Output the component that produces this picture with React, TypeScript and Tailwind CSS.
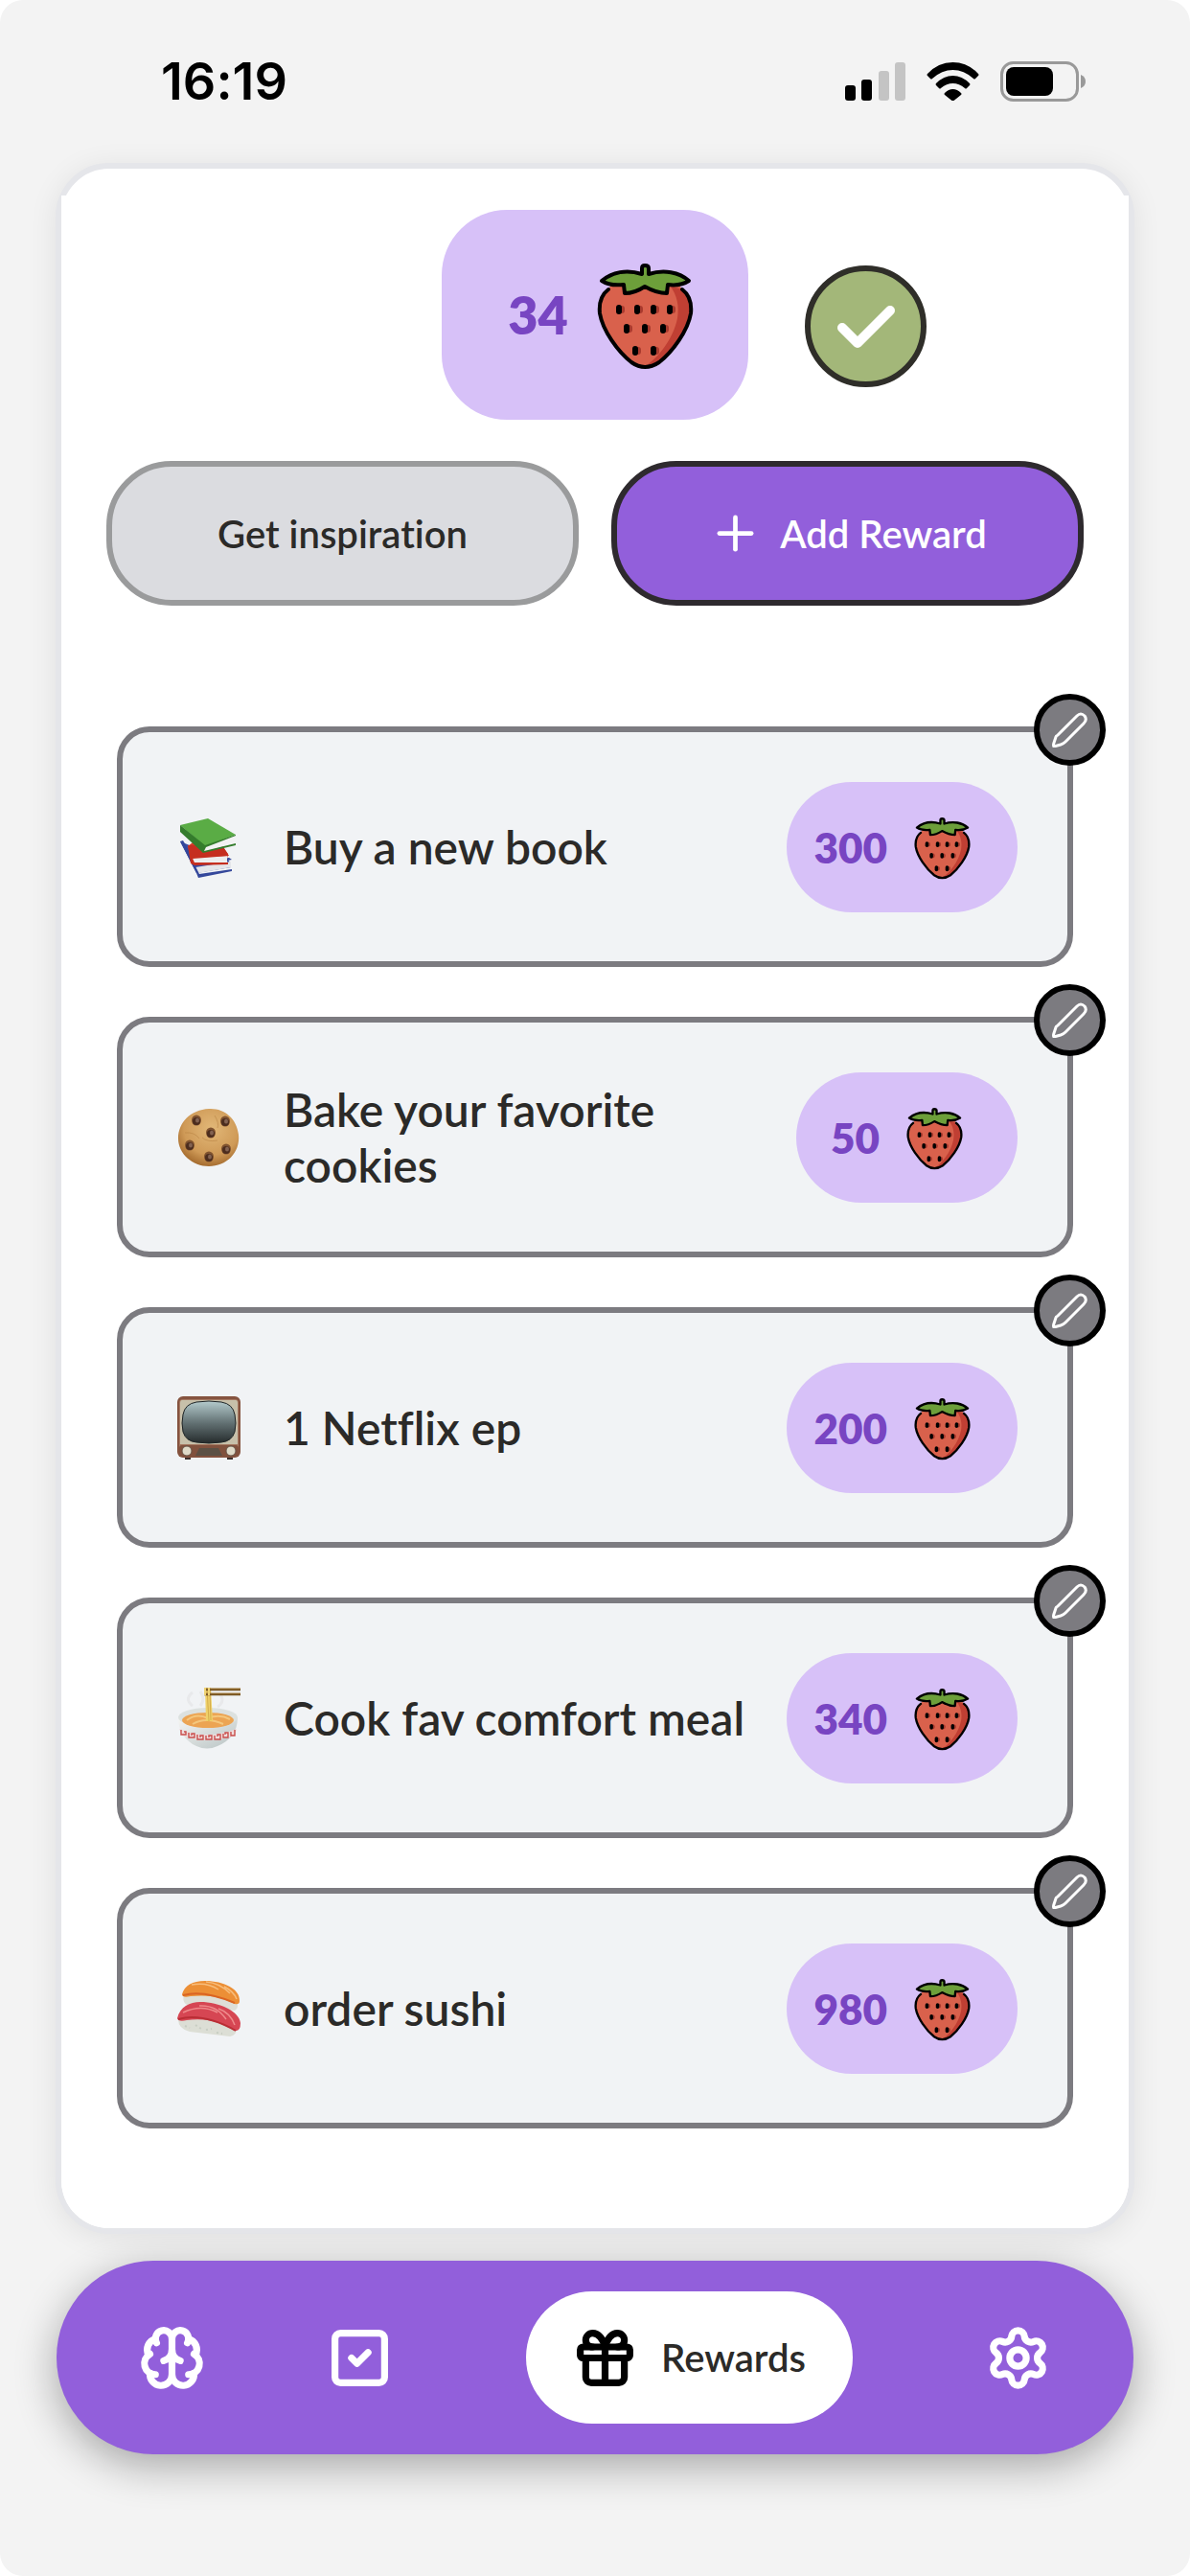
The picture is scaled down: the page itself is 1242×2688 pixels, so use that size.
import { Brain, Gift, Plus, Settings, SquareCheck } from "lucide-react";
import type { ComponentType } from "react";

interface Reward {
  title: string;
  cost: number;
  icon: ComponentType;
}

function Strawberry({ className }: { className: string }) {
  const seeds = [
    [23, 48], [42, 48], [59, 48], [76, 48],
    [31, 68], [50, 68], [69, 68],
    [40, 91], [59, 91],
  ];
  return (
    <svg viewBox="0 0 101 111" className={className} aria-hidden="true">
      <path d="M12 27C4 33 2 42 3 52C6 70 22 92 36 103Q50 113 65 103C79 92 95 70 98 52C99 42 97 33 89 27L84 20H16Z" fill="#d9614c" />
      <path d="M76 23L89 27C97 33 99 42 98 52C95 70 79 92 65 103Q57 108 49 108C64 99 80 78 84 57C86 45 84 33 76 23Z" fill="#c03f33" />
      {seeds.map(([x, y]) => (
        <g key={`${x}-${y}`}>
          <rect x={x} y={y - 4} width="6" height="8" rx="3" fill="#a93a2e" />
          <rect x={x - 3} y={y - 5} width="6" height="10" rx="3" fill="#000" />
        </g>
      ))}
      <path d="M12 27C4 33 2 42 3 52C6 70 22 92 36 103Q50 113 65 103C79 92 95 70 98 52C99 42 97 33 89 27" fill="none" stroke="#000" strokeWidth="4" strokeLinecap="round" />
      <path d="M47 11V5Q47 2 50 2Q54 2 54 5V11C70 6 86 9 96 18C90 22 82 23 74 22L73 31C64 31 57 28 50 24C44 28 37 31 29 31L28 22C19 23 11 22 5 18C16 9 31 6 47 11Z" fill="#6d9f3a" stroke="#000" strokeWidth="4" strokeLinejoin="round" />
    </svg>
  );
}

function Books() {
  return (
    <svg viewBox="0 0 66 66" className="size-full" aria-hidden="true">
      <path d="M3 27L20 60L56 54L54 47L30 38Z" fill="#3b4fa6" />
      <path d="M19 54L56 48V54L22 60Z" fill="#e4e5ea" />
      <path d="M3 27L20 60L22 65L57 58V56L23 61L19 53L57 46L54 44L20 50L6 26Z" fill="#34479b" />
      <path d="M11 32L15 50L51 50L53 40L47 32L20 25Z" fill="#d93a29" />
      <path d="M16 44L52 42V49L17 51Z" fill="#ededee" />
      <path d="M11 31L14 50L18 52L53 51V49L18 49L16 45L54 42L47 31Z" fill="#c52e20" />
      <path d="M3 10L32 3L61 20L29 32Z" fill="#5aac45" />
      <path d="M28 32L60 22V29L28 38Z" fill="#f2f2f2" />
      <path d="M3 10L29 31L61 20V21L30 33L28 37L61 29V31L27 39L3 17Z" fill="#347c2c" />
    </svg>
  );
}

function Cookie() {
  const chips = [
    [20, 15], [50, 16], [35, 28], [13, 41], [51, 45], [33, 53],
  ];
  return (
    <svg viewBox="0 0 66 66" className="size-full" aria-hidden="true">
      <defs>
        <radialGradient id="cookie" cx="0.55" cy="0.35" r="0.65">
          <stop offset="0" stopColor="#e2b878" />
          <stop offset="0.7" stopColor="#cf9a57" />
          <stop offset="1" stopColor="#a66d30" />
        </radialGradient>
      </defs>
      <path d="M33 3C49 2 62 13 64 30C66 49 51 63 33 63C16 63 1 50 1 34C1 17 14 4 33 3Z" fill="url(#cookie)" />
      <path d="M8 28Q18 27 23 34M26 33Q31 38 42 36M39 10Q44 18 42 23" fill="none" stroke="#b98345" strokeWidth="1" opacity="0.6" />
      {chips.map(([x, y]) => (
        <g key={`${x}-${y}`}>
          <ellipse cx={x} cy={y} rx="5" ry="5.5" fill="#80532f" />
          <ellipse cx={x} cy={y + 1} rx="4" ry="4" fill="#4c2d1e" />
          <ellipse cx={x + 1} cy={y} rx="2" ry="2.5" fill="#836251" />
        </g>
      ))}
    </svg>
  );
}

function Television() {
  return (
    <svg viewBox="0 0 66 66" className="size-full" aria-hidden="true">
      <defs>
        <linearGradient id="screen" x1="0" y1="0" x2="0" y2="1">
          <stop offset="0" stopColor="#b4cbcd" />
          <stop offset="0.5" stopColor="#657476" />
          <stop offset="1" stopColor="#252b2c" />
        </linearGradient>
      </defs>
      <path d="M8 63H14V66H8ZM52 63H58V66H52Z" fill="#3d302c" />
      <rect x="0" y="0" width="66" height="64" rx="6" fill="#85533f" />
      <rect x="2" y="3" width="62" height="60" rx="4" fill="#a47760" />
      <path d="M5 4H61Q63 4 63 7V50H3V7Q3 4 5 4Z" fill="#c7c0aa" />
      <path d="M20 6Q33 4 46 6Q58 8 60 19Q62 28 60 37Q57 47 46 48Q33 50 20 48Q9 47 6 37Q4 28 6 19Q8 8 20 6Z" fill="url(#screen)" stroke="#1e2426" strokeWidth="1" />
      <rect x="2" y="51" width="62" height="12" rx="3" fill="#81513d" />
      <path d="M23 54H43L47 62H19Z" fill="#5c5044" />
      <circle cx="10" cy="57" r="5" fill="#dfdac8" stroke="#655346" />
      <circle cx="56" cy="57" r="5" fill="#dfdac8" stroke="#655346" />
    </svg>
  );
}

function Noodles() {
  return (
    <svg viewBox="0 0 66 66" className="size-full" aria-hidden="true">
      <defs>
        <linearGradient id="bowl" x1="0" y1="0" x2="1" y2="1">
          <stop offset="0" stopColor="#f6f6f3" />
          <stop offset="1" stopColor="#b7c2c3" />
        </linearGradient>
      </defs>
      <path d="M16 20Q7 13 16 6M24 20Q30 13 24 5M42 21Q50 16 45 8" fill="none" stroke="#e8e9eb" strokeWidth="3" />
      <path d="M1 32C1 47 9 57 20 62Q31 67 42 62C54 57 63 48 63 32Z" fill="url(#bowl)" />
      <ellipse cx="32" cy="32" rx="31" ry="10" fill="#dce1df" />
      <ellipse cx="32" cy="35" rx="27" ry="8" fill="#eca452" />
      <path d="M10 35Q20 27 32 33Q44 28 55 34M16 39Q30 31 48 39" fill="none" stroke="#f4c77d" strokeWidth="2" />
      <path d="M2 44Q31 56 62 44L60 51Q32 60 5 51Z" fill="#efdddd" />
      <path d="M4 45V50H9V47H7M12 48V53H18V49H15V51M21 50V55H27V51H24V53M30 51V55H36V51H33V53M39 51V55H45V50H42V52M48 49V53H53V48H50V50M56 47V51H60V45" fill="none" stroke="#c94e4c" strokeWidth="1.4" />
      <path d="M29 1L30 36H37L35 1Z" fill="#efd16a" />
      <path d="M31 2L33 36M34 2L35 35" stroke="#c99e3e" strokeWidth="0.7" />
      <path d="M28 3H66M28 8H66" stroke="#765321" strokeWidth="2.4" />
      <path d="M28 2H66M28 7H66" stroke="#b38b46" strokeWidth="0.8" />
      <path d="M29 1V9M33 1V9" stroke="#f0d476" strokeWidth="2" />
    </svg>
  );
}

function Sushi() {
  return (
    <svg viewBox="0 0 66 66" className="size-full" aria-hidden="true">
      <path d="M7 19Q4 28 15 31L60 35Q65 32 62 25L22 15Z" fill="#dedfd7" />
      <path d="M5 18Q9 4 29 4C49 4 66 13 65 25Q65 29 60 28C47 21 33 18 14 20Q5 22 5 18Z" fill="#ec8f36" />
      <path d="M15 8Q31 5 43 13M30 5Q44 6 55 17M49 10Q59 15 62 23" fill="none" stroke="#f7bd7c" strokeWidth="1.5" />
      <path d="M6 19Q27 13 60 27" fill="none" stroke="#da6423" strokeWidth="2" />
      <path d="M1 44Q1 54 13 57L55 62Q62 61 62 53L28 41Z" fill="#dcded5" />
      <path d="M8 51L13 53M19 50L25 54M30 55L36 54M41 58L47 59" stroke="#c8cdc3" strokeWidth="2" strokeDasharray="2 3" />
      <path d="M0 43C3 31 13 26 24 26C44 26 65 36 66 48Q66 57 60 56C45 47 30 42 10 45Q1 47 0 43Z" fill="#d64653" />
      <path d="M6 37Q25 28 42 37M23 30Q41 29 51 44M43 33Q55 37 60 50" fill="none" stroke="#ee8a8b" strokeWidth="1.5" />
      <path d="M1 44Q27 37 61 56" fill="none" stroke="#b92e35" strokeWidth="2" />
    </svg>
  );
}

function PencilIcon() {
  return (
    <svg viewBox="0 0 37 37" className="size-[37px]" fill="none" stroke="#fff" strokeWidth="3" strokeLinejoin="round" aria-hidden="true">
      <path d="M26 4Q30 0 34 4Q37 8 33 12L14 31Q12 33 9 34L2 36Q1 35 2 32L4 26Q4 25 6 24Z" />
    </svg>
  );
}

const rewards: Reward[] = [
  { title: "Buy a new book", cost: 300, icon: Books },
  { title: "Bake your favorite cookies", cost: 50, icon: Cookie },
  { title: "1 Netflix ep", cost: 200, icon: Television },
  { title: "Cook fav comfort meal", cost: 340, icon: Noodles },
  { title: "order sushi", cost: 980, icon: Sushi },
];

function RewardCard({ title, cost, icon: Icon }: Reward) {
  return (
    <li className="relative flex h-[251px] items-center rounded-[34px] border-6 border-[#7c7b80] bg-[#f1f3f5] pr-[52px] pl-[57px]">
      <div className="size-[66px] shrink-0">
        <Icon />
      </div>
      <p className="ml-[45px] min-w-0 flex-1 text-[48px] leading-[58px] font-semibold text-[#2b2a28]">{title}</p>
      <div className="flex h-[136px] min-w-[231px] shrink-0 items-center justify-center gap-7 rounded-full bg-[#d7c1f8] pr-[49px] pl-7">
        <span className="text-[44px] leading-[58px] font-extrabold text-[#7845c2]">{cost}</span>
        <Strawberry className="mt-1 h-[65px] w-[59px]" />
      </div>
      <button
        type="button"
        aria-label={`Edit ${title}`}
        className="absolute -top-10 -right-10 flex size-[75px] items-center justify-center rounded-full border-6 border-black bg-[#7c7b80]"
      >
        <PencilIcon />
      </button>
    </li>
  );
}

function StatusBar() {
  return (
    <header className="flex h-[170px] items-center justify-between pr-[108px] pl-[168px]">
      <span className="font-['Inter',sans-serif] text-[54px] leading-[64px] font-semibold text-black">16:19</span>
      <div className="flex items-center gap-[22px]">
        <svg viewBox="0 0 63 40" className="h-10 w-[63px]" aria-hidden="true">
          <rect x="0" y="24" width="11" height="16" rx="3" />
          <rect x="17" y="18" width="11" height="22" rx="3" />
          <rect x="35" y="9" width="11" height="31" rx="3" fill="#c4c4c4" />
          <rect x="52" y="0" width="11" height="40" rx="3" fill="#c4c4c4" />
        </svg>
        <svg viewBox="0 0 55 40" className="h-10 w-[55px]" aria-hidden="true">
          <path d="M1 12Q12 0 27.500 0Q43 0 54 12Q55 13 54 14L51 17Q50 18 49 17Q39 8 27.500 8Q16 8 6 17Q5 18 4 17L1 14Q0 13 1 12Z" />
          <path d="M10 22Q18 14 27.500 14Q37 14 45 22Q46 23 45 24L42 27Q41 28 40 27Q34 22 27.500 22Q21 22 15 27Q14 28 13 27L10 24Q9 23 10 22Z" />
          <path d="M19 32Q23 28 27.500 28Q32 28 36 32Q37 33 36 34L28.500 40Q27.500 41 26.500 40L19 34Q18 33 19 32Z" />
        </svg>
        <svg viewBox="0 0 90 42" className="h-[42px] w-[90px]" aria-hidden="true">
          <rect x="1.500" y="1.500" width="79" height="39" rx="12" fill="none" stroke="#999" strokeWidth="3" />
          <rect x="6" y="6" width="49" height="30" rx="8" />
          <path d="M84 14Q89 16 89 21Q89 26 84 28Z" fill="#999" />
        </svg>
      </div>
    </header>
  );
}

function BottomNav() {
  return (
    <nav className="mx-[59px] mt-7 flex h-[202px] items-center justify-between rounded-full bg-[#925fdb] px-[86px] text-white shadow-[0_12px_44px_rgba(0,0,0,0.32)]">
      <div className="flex items-center gap-[127px]">
        <button type="button" aria-label="Focus">
          <Brain size={69} strokeWidth={2.5} />
        </button>
        <button type="button" aria-label="Tasks">
          <SquareCheck size={69} strokeWidth={2.5} />
        </button>
      </div>
      <button type="button" className="flex h-[138px] w-[341px] items-center justify-center gap-6 rounded-full bg-white">
        <Gift size={69} strokeWidth={2.5} color="#000" />
        <span className="text-[40px] leading-[48px] font-semibold text-[#2b2a28]">Rewards</span>
      </button>
      <button type="button" aria-label="Settings">
        <Settings size={69} strokeWidth={2.5} />
      </button>
    </nav>
  );
}

export default function App() {
  return (
    <div className="min-h-screen bg-white font-['Lato',sans-serif] [font-variant-ligatures:none]">
      <div className="min-h-screen rounded-[24px] bg-[#f3f3f3]">
        <StatusBar />
        <main className="mx-[58px] rounded-[56px] border-6 border-[#e5e6ea] bg-white pt-7 shadow-[0_4px_30px_rgba(0,0,0,0.08)]">
          {/* the scroll area has square top corners and covers the frame's curve */}
          <div className="rounded-b-[50px] bg-white pt-[15px] pb-[104px]">
            <div className="grid grid-cols-[1fr_auto_1fr] items-center">
              <div className="col-start-2 flex h-[219px] w-80 items-center justify-center gap-[30px] rounded-[68px] bg-[#d7c1f8] pl-3">
                <span className="text-[54px] leading-[68px] font-extrabold text-[#7845c2]">34</span>
                <Strawberry className="mt-1 h-[111px] w-[101px]" />
              </div>
              <button
                type="button"
                aria-label="Done"
                className="mt-6 ml-[59px] flex size-[127px] items-center justify-center rounded-full border-6 border-[#2f2e29] bg-[#a3b779]"
              >
                <svg viewBox="0 0 60 44" className="h-11 w-[60px]" fill="none" stroke="#fff" strokeWidth="10" strokeLinecap="round" strokeLinejoin="round" aria-hidden="true">
                  <path d="M5 23L21 39L55 5" />
                </svg>
              </button>
            </div>

            <div className="mt-[43px] grid grid-cols-2 gap-[34px] px-[47px] text-[40px] leading-[48px] font-semibold">
              <button type="button" className="h-[151px] rounded-[68px] border-6 border-[#9a9b9c] bg-[#dbdce0] text-[#2b2a28]">
                Get inspiration
              </button>
              <button type="button" className="flex h-[151px] items-center justify-center gap-[18px] rounded-[68px] border-6 border-[#2e2a2e] bg-[#925fdb] text-white">
                <Plus size={57} strokeWidth={2} />
                Add Reward
              </button>
            </div>

            <ul className="mt-[126px] flex flex-col gap-[52px] px-[58px]">
              {rewards.map((reward) => (
                <RewardCard key={reward.title} {...reward} />
              ))}
            </ul>
          </div>
        </main>
        <BottomNav />
      </div>
    </div>
  );
}
